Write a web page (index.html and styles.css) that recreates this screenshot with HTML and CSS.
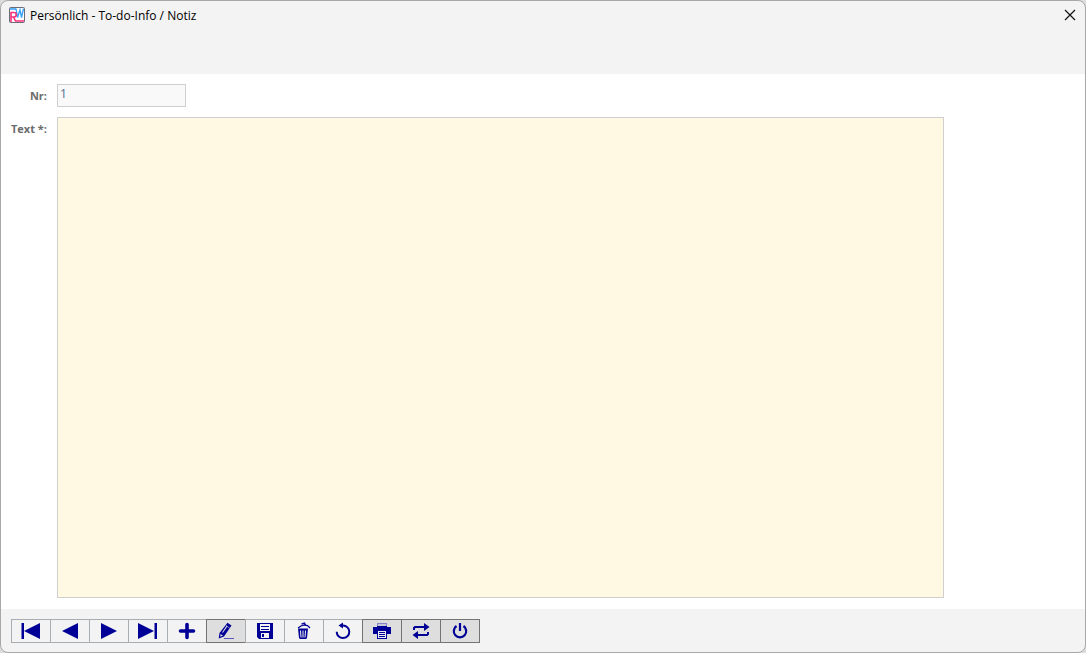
FILE: index.html
```html
<!DOCTYPE html>
<html lang="de">
<head>
  <meta charset="UTF-8">
  <meta name="viewport" content="width=device-width, initial-scale=1.0">
  <title>Persönlich - To-do-Info / Notiz</title>
  <link rel="stylesheet" href="styles.css">
</head>
<body>
  <div class="window">
    <header class="titlebar">
      <svg class="logo" viewBox="0 0 16 16" aria-hidden="true">
        <rect x="0.5" y="0.5" width="15" height="15" rx="1" fill="#fff" stroke="#6b6b78"/>
        <path d="M1 2h6" stroke="#2f9bf5" stroke-width="1.500"/>
        <path d="M7 1.500l1.500 9L11 3l1.500 7.500L14.500 1.500" fill="none" stroke="#3ba3f8" stroke-width="1.400"/>
        <path d="M2 15V5.500h3a2 2 0 0 1 0 4.500H2M4.500 10L6.500 14H15" fill="none" stroke="#f5307c" stroke-width="1.600"/>
      </svg>
      <h1 class="title">Persönlich - To-do-Info / Notiz</h1>
      <button class="close" type="button" aria-label="Schließen">
        <svg viewBox="0 0 12 12"><path d="M1 1l10 10M11 1L1 11" stroke="#111" stroke-width="1.200"/></svg>
      </button>
    </header>

    <main class="content">
      <div class="form-row">
        <label for="nr">Nr:</label>
        <input type="text" id="nr" value="1" readonly>
      </div>
      <div class="form-row form-row-text">
        <label for="text">Text *:</label>
        <textarea id="text"></textarea>
      </div>
    </main>

    <footer class="toolbar">
      <button class="tool" type="button" aria-label="Erster">
        <svg viewBox="0 0 22 18"><path d="M1.500 1H4v16H1.500zM20 1v16L4 9z"/></svg>
      </button>
      <button class="tool" type="button" aria-label="Zurück">
        <svg viewBox="0 0 22 18"><path d="M19 1v16L3 9z"/></svg>
      </button>
      <button class="tool" type="button" aria-label="Weiter">
        <svg viewBox="0 0 22 18"><path d="M3 1v16l16-8z"/></svg>
      </button>
      <button class="tool" type="button" aria-label="Letzter">
        <svg viewBox="0 0 22 18"><path d="M1 1v16l16-8zM17.500 1H20v16h-2.500z"/></svg>
      </button>
      <button class="tool" type="button" aria-label="Neu">
        <svg viewBox="0 0 22 18"><path class="line" d="M11 2.500v13M4.500 9h13" stroke-width="3.600" stroke-linecap="round"/></svg>
      </button>
      <button class="tool active" type="button" aria-label="Bearbeiten">
        <svg viewBox="0 0 22 18">
          <path d="M12.500 0.800l4 2.700-7.500 11-5.300 2 .800-5.500z"/>
          <path d="M7.500 10.500l4.500-6.500" fill="none" stroke="#dedede" stroke-width="1.100"/>
          <path d="M11 3.500l3.500 2.500" stroke="#dedede" stroke-width="0.600"/>
          <path d="M5.500 12l2.500 1.600-2.700 1.200z" fill="#dedede"/>
          <path d="M9 16.500h10" stroke="#5558bd"/>
        </svg>
      </button>
      <button class="tool" type="button" aria-label="Speichern">
        <svg viewBox="0 0 22 18">
          <path d="M3 1h16v16H5l-2-2z"/>
          <path d="M6 2h10v7H6zM7 11h8v5H7z" fill="#f3f3f3"/>
          <path d="M7 4h8v1H7zM7 7h8v1H7zM8 12h2v3H8z"/>
        </svg>
      </button>
      <button class="tool" type="button" aria-label="Löschen">
        <svg viewBox="0 0 22 18">
          <path d="M5 6.500h10L14 16l-1 1H7l-1-1z"/>
          <path d="M7.500 8.500l.500 7M10 8.500v7M12.500 8.500l-.500 7" stroke="#f3f3f3"/>
          <path class="line" d="M5 6l3-2 3.500-1 3 .500L17 6M8.500 2.200l3-1.200 1 1.800" stroke-width="1.300"/>
        </svg>
      </button>
      <button class="tool" type="button" aria-label="Rückgängig">
        <svg viewBox="0 0 22 18">
          <path class="line" d="M9 3.500h2a6.300 6.300 0 1 1-6.300 6.300" stroke-width="2"/>
          <path d="M11 0.500v6L6.500 3.500z"/>
        </svg>
      </button>
      <button class="tool active" type="button" aria-label="Drucken">
        <svg viewBox="0 0 22 18">
          <path d="M6 1h10v4H6z" fill="#8586c4"/>
          <path d="M7 2h8v2H7z" fill="#c9c9da"/>
          <path d="M6 4h10v1h4v7H2V5h4z"/>
          <path d="M6 9h10v8H6z"/>
          <path d="M7 9h8v7H7z" fill="#ececf2"/>
          <path d="M8 10h6v1H8zM8 12h6v1H8zM8 14h6v1H8z"/>
        </svg>
      </button>
      <button class="tool active" type="button" aria-label="Wechseln">
        <svg viewBox="0 0 22 18">
          <path class="line" d="M4 8V6l1-1h10M18 10v2l-1 1H7" stroke-width="2"/>
          <path d="M14 1l5.500 4L14 9zM8 9v8l-5.500-4z"/>
        </svg>
      </button>
      <button class="tool active" type="button" aria-label="Beenden">
        <svg viewBox="0 0 22 18"><path class="line" d="M7.500 4a6.200 6.200 0 1 0 7 0M11 1v8" stroke-width="2.200"/></svg>
      </button>
    </footer>
  </div>
</body>
</html>
```

FILE: styles.css
```css
* {
  box-sizing: border-box;
}
body {
  margin: 0;
  background-color: #dcdcdc;
  color: #000;
  font-family: "Noto Sans", "Open Sans", sans-serif;
  font-size: 12px;
}
.window {
  display: flex;
  flex-direction: column;
  height: 100vh;
  border: 1px solid #a8a8a8;
  border-radius: 8px;
  background-color: #f3f3f3;
  overflow: hidden;
}
.titlebar {
  display: flex;
  align-items: flex-start;
  height: 73px;
  padding: 6px 7px 6px 8px;
}
.logo {
  width: 16px;
  height: 16px;
  margin-right: 5px;
}
.title {
  flex: 1;
  margin: 0;
  font-family: "Open Sans", "Noto Sans", sans-serif;
  font-size: 12px;
  font-weight: 400;
  line-height: 18px;
}
.close {
  display: flex;
  padding: 2px;
  border: none;
  background: none;
}
.close svg {
  width: 12px;
  height: 12px;
}
.content {
  display: flex;
  flex: 1;
  flex-direction: column;
  gap: 10px;
  padding: 10px 13% 11px 10px;
  background-color: #fff;
}
.form-row {
  display: flex;
  gap: 10px;
}
.form-row-text {
  flex: 1;
}
label {
  width: 36px;
  color: #6b6b6b;
  font-family: "Open Sans", "Noto Sans", sans-serif;
  font-size: 11px;
  font-weight: 700;
  line-height: 23px;
  text-align: right;
  white-space: nowrap;
}
input, textarea {
  margin: 0;
  border: 1px solid #cfcfcf;
  border-radius: 0;
  outline: none;
  font-family: inherit;
  font-size: 12px;
}
input {
  width: 129px;
  height: 23px;
  padding: 0 2px 4px;
  background-color: #f9f9f9;
  color: #5d7896;
}
textarea {
  flex: 1;
  padding: 3px;
  background-color: #fff8e3;
  resize: none;
}
.toolbar {
  display: flex;
  padding: 10px 10px 9px;
}
.tool {
  display: flex;
  align-items: center;
  justify-content: center;
  width: 40px;
  height: 24px;
  margin-right: -1px;
  padding: 0;
  border: 1px solid #a7adb0;
  background-color: #f3f3f3;
}
.tool.active {
  border-color: #737373;
  background-color: #dedede;
}
.tool svg {
  width: 22px;
  height: 18px;
  fill: #000096;
}
.tool .line {
  fill: none;
  stroke: #000096;
}
```
